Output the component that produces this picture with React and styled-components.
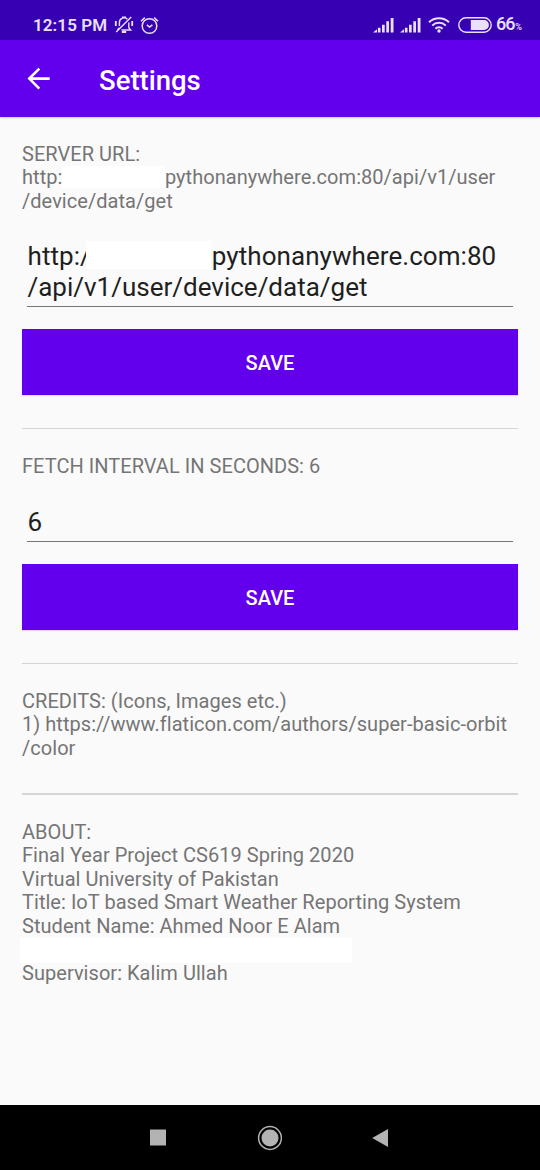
import React from "react";
import styled, { createGlobalStyle } from "styled-components";

const GlobalStyle = createGlobalStyle`
  * { box-sizing: border-box; }
  body { margin: 0; background: #fafafa; font-family: Roboto, sans-serif; }
`;

const Screen = styled.div`
  width: 540px;
  height: 1170px;
  display: flex;
  flex-direction: column;
  overflow: hidden;
  background: #fafafa;
`;

const StatusBar = styled.header`
  height: 40px;
  flex: none;
  display: flex;
  align-items: center;
  justify-content: space-between;
  padding: 10px 19px 0 33px;
  background: #3700b3;
  color: #ebe0fa;
`;

const StatusGroup = styled.div`
  display: flex;
  align-items: center;
  height: 30px;
  svg { display: block; flex: none; }
`;

const Clock = styled.span`
  width: 81px;
  font-size: 17px;
  line-height: 30px;
  font-weight: 600;
  letter-spacing: 0.1px;
  white-space: nowrap;
`;

const Battery = styled.span`
  width: 25px;
  margin-left: 4px;
  padding-top: 1px;
  font-size: 18px;
  line-height: 30px;
  font-weight: 500;
  letter-spacing: -0.9px;
  white-space: nowrap;
  small { margin-left: 0.5px; font-size: 9px; }
`;

const AppBar = styled.div`
  height: 77px;
  flex: none;
  display: flex;
  align-items: center;
  padding: 0 22px 0 27px;
  background: #6200ee;
  box-shadow: 0 1px 2px rgba(0, 0, 0, 0.2);
  color: #fff;
  svg { display: block; }
`;

const Title = styled.h1`
  margin: 4px 0 0 48px;
  font-size: 27.5px;
  line-height: 32px;
  font-weight: 500;
`;

const Content = styled.main`
  flex: 1;
  display: flex;
  flex-direction: column;
  padding: 25.5px 22px 0;
`;

const Info = styled.p`
  margin: 0;
  font-size: 20px;
  line-height: 23.5px;
  letter-spacing: 0.04px;
  color: #757575;
  white-space: nowrap;
`;

const Line = styled.span`
  display: block;
  height: 23.5px;
`;

const Field = styled.div`
  height: ${(p) => p.$height}px;
  margin: ${(p) => p.$top}px 5.5px 22px 5px;
  padding: ${(p) => p.$pad || 0}px 0 0 0.5px;
  border-bottom: 1.4px solid #757575;
  font-size: 26px;
  line-height: 30.5px;
  color: #1f1f1f;
  white-space: nowrap;
`;

const FieldLine = styled.div`
  height: 30.5px;
  letter-spacing: ${(p) => p.$spacing || 0}px;
`;

const Mask = styled.span`
  display: inline-block;
  position: relative;
  width: ${(p) => p.$width}px;
  height: ${(p) => p.$height}px;
  margin: 0 ${(p) => p.$right || 0}px 0 ${(p) => p.$left || 0}px;
  vertical-align: top;
  background: #fff;
`;

const SaveButton = styled.button`
  height: 66px;
  flex: none;
  padding: 2px 0 0;
  border: 0;
  background: #6200ee;
  box-shadow: 0 1px 1px rgba(98, 0, 238, 0.15);
  color: #fff;
  font: 500 20px/24px Roboto, sans-serif;
`;

const Divider = styled.hr`
  width: 100%;
  height: 1.4px;
  flex: none;
  margin: 33px 0 ${(p) => p.$bottom}px;
  border: 0;
  background: #d5d5d5;
`;

const NavBar = styled.nav`
  height: 65px;
  flex: none;
  display: flex;
  align-items: center;
  justify-content: space-between;
  padding: 0 151px 0 149px;
  background: #000;
  svg { display: block; }
`;

const MutedBell = () => (
  <svg width="20" height="20" viewBox="0 0 20 20" fill="none" stroke="currentColor" strokeWidth="1.4">
    <path d="M5.4 11V7.4a4.7 4.7 0 0 1 8-3.2M14.8 7.5v5.2l1.9 2.3H7.5M5.2 12.8 3.6 15M8 2.2h4" />
    <path d="M7.8 17h4.4" strokeWidth="2" />
    <path d="M2.2 17 17.2 2" />
    <path d="M1.8 6v5M18.2 6v5" strokeWidth="1.8" />
  </svg>
);

const AlarmClock = () => (
  <svg width="19" height="19" viewBox="0 0 19 19" fill="none" stroke="currentColor" strokeWidth="1.5">
    <circle cx="9.5" cy="10" r="7.3" />
    <path d="m6.8 8.9 2.7 2.2 2.9-2.2M1 5.2 4.8 1.6M18 5.2l-3.8-3.6" />
  </svg>
);

const Signal = () => (
  <svg width="21" height="16" viewBox="0 0 21 16" fill="currentColor">
    <path d="M0 15.4 4 12.3v3.1zM4.9 10.8h2.6v4.6H4.9zM9 7.8h2.7v7.6H9zM13.3 4.3H16v11.1h-2.7zM17.7 1h2.8v14.4h-2.8z" />
  </svg>
);

const Wifi = () => (
  <svg width="22" height="16" viewBox="0 0 22 16" fill="none" stroke="currentColor" strokeWidth="2">
    <path d="M1 5.3a14.5 14.5 0 0 1 20 0M4.2 8.6a9.8 9.8 0 0 1 13.6 0M7.4 11.8a5 5 0 0 1 7.2 0" />
    <circle cx="11" cy="14" r="1.7" fill="currentColor" stroke="none" />
  </svg>
);

const BatteryIcon = () => (
  <svg width="34" height="16" viewBox="0 0 34 16">
    <rect x=".8" y=".8" width="32.4" height="14.4" rx="7.2" fill="none" stroke="currentColor" strokeWidth="1.4" />
    <path d="M12.8 3.1H26a4.9 4.9 0 0 1 0 9.8H12.8z" fill="currentColor" />
  </svg>
);

const BackArrow = () => (
  <svg width="24" height="24" viewBox="0 0 24 24" fill="none" stroke="currentColor" strokeWidth="2.6">
    <path d="M22.7 11.6H3M12.3 1.6 2.3 11.6l10 10" />
  </svg>
);

const Gap = styled.span`
  width: ${(p) => p.$width}px;
`;

export default function App() {
  return (
    <>
      <GlobalStyle />
      <Screen>
        <StatusBar>
          <StatusGroup>
            <Clock>12:15 PM</Clock>
            <MutedBell />
            <Gap $width={6} />
            <AlarmClock />
          </StatusGroup>
          <StatusGroup>
            <Signal />
            <Gap $width={6} />
            <Signal />
            <Gap $width={7} />
            <Wifi />
            <Gap $width={8} />
            <BatteryIcon />
            <Battery>66<small>%</small></Battery>
          </StatusGroup>
        </StatusBar>
        <AppBar>
          <BackArrow />
          <Title>Settings</Title>
        </AppBar>
        <Content>
          <Info>
            <Line>SERVER URL:</Line>
            <Line>http:<Mask $width={102.5} $height={22} />pythonanywhere.com:80/api/v1/user</Line>
            <Line>/device/data/get</Line>
          </Info>
          <Field $top={28} $height={66}>
            <FieldLine $spacing={0.06}>http:/<Mask $width={125} $height={28} $left={-5} $right={1} />pythonanywhere.com:80</FieldLine>
            <FieldLine>/api/v1/user/device/data/get</FieldLine>
          </Field>
          <SaveButton>SAVE</SaveButton>
          <Divider $bottom={25.6} />
          <Info>FETCH INTERVAL IN SECONDS: 6</Info>
          <Field $top={27.9} $height={35.5} $pad={0.6}>6</Field>
          <SaveButton>SAVE</SaveButton>
          <Divider $bottom={25.7} />
          <Info>
            <Line>CREDITS: (Icons, Images etc.)</Line>
            <Line>1) https://www.flaticon.com/authors/super-basic-orbit</Line>
            <Line>/color</Line>
          </Info>
          <Divider $bottom={25.8} />
          <Info>
            <Line>ABOUT:</Line>
            <Line>Final Year Project CS619 Spring 2020</Line>
            <Line>Virtual University of Pakistan</Line>
            <Line>Title: IoT based Smart Weather Reporting System</Line>
            <Line>Student Name: Ahmed Noor E Alam</Line>
            <Line><Mask $width={332} $height={25} $left={-2} /></Line>
            <Line>Supervisor: Kalim Ullah</Line>
          </Info>
        </Content>
        <NavBar>
          <svg width="17" height="17" viewBox="0 0 17 17"><path d="M1 .5h16v16H1z" fill="#b3b3b3" /></svg>
          <svg width="26" height="26" viewBox="0 0 26 26">
            <circle cx="14" cy="13" r="11.4" fill="none" stroke="#b3b3b3" strokeWidth="1.5" />
            <circle cx="14" cy="13" r="8.5" fill="#b3b3b3" />
          </svg>
          <svg width="17" height="20" viewBox="0 0 17 20"><path d="M.2 10 16 1v18z" fill="#b3b3b3" /></svg>
        </NavBar>
      </Screen>
    </>
  );
}
